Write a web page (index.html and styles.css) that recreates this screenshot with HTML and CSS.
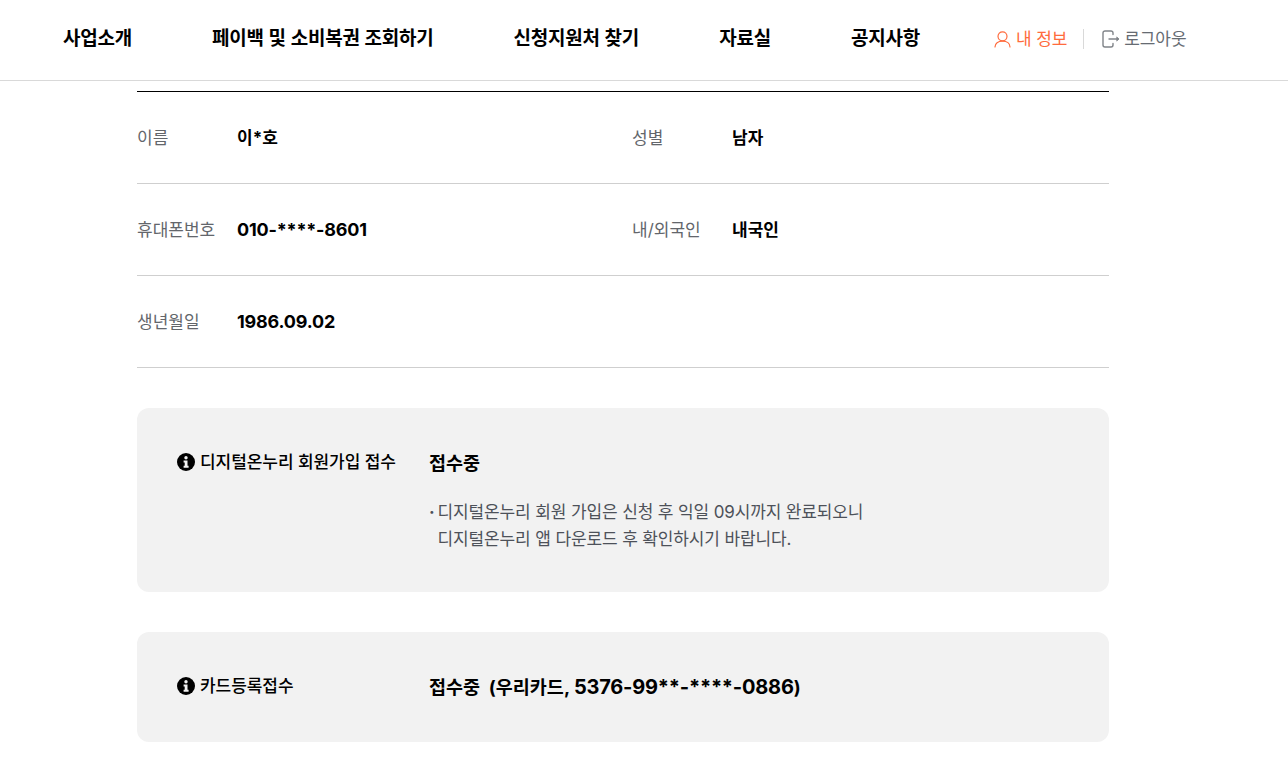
FILE: index.html
```html
<!DOCTYPE html>
<html lang="ko">
<head>
<meta charset="utf-8">
<title>내 정보</title>
<link rel="stylesheet" href="styles.css">
</head>
<body>
<header class="header">
  <nav class="nav">
    <a class="nav-item">사업소개</a>
    <a class="nav-item">페이백 및 소비복권 조회하기</a>
    <a class="nav-item">신청지원처 찾기</a>
    <a class="nav-item">자료실</a>
    <a class="nav-item">공지사항</a>
  </nav>
  <div class="util">
    <a class="util-link util-me">
      <svg class="util-icon" width="17" height="17" viewBox="0 0 17 17" fill="none" stroke="#ff6b3d" stroke-width="1.200"><circle cx="8.500" cy="5.300" r="4.500"/><path d="M1 16c0-3.500 3-5.800 7.500-5.800S16 12.500 16 16" stroke-linecap="round"/></svg>
      내 정보
    </a>
    <span class="util-sep"></span>
    <a class="util-link util-out">
      <svg class="util-icon" width="18" height="18" viewBox="0 0 18 18" fill="none" stroke="#808489" stroke-width="1.400" stroke-linecap="round" stroke-linejoin="round"><path d="M11 4.500V3a2 2 0 0 0-2-2H3a2 2 0 0 0-2 2v12a2 2 0 0 0 2 2h6a2 2 0 0 0 2-2v-1.500"/><path d="M7 9h9"/><path d="M15 7.200 17 9l-2 1.800z" fill="#808489" stroke-width="0.800"/></svg>
      로그아웃
    </a>
  </div>
</header>
<main class="main">
  <section class="info">
    <div class="info-row">
      <div class="info-cell"><span class="label">이름</span><span class="value">이*호</span></div>
      <div class="info-cell"><span class="label">성별</span><span class="value">남자</span></div>
    </div>
    <div class="info-row">
      <div class="info-cell"><span class="label">휴대폰번호</span><span class="value num">010-****-8601</span></div>
      <div class="info-cell"><span class="label">내/외국인</span><span class="value">내국인</span></div>
    </div>
    <div class="info-row">
      <div class="info-cell"><span class="label">생년월일</span><span class="value num">1986.09.02</span></div>
    </div>
  </section>
  <section class="panel panel-member">
    <div class="panel-title">
      <svg class="info-icon" width="18" height="18" viewBox="0 0 18 18"><circle cx="9" cy="9" r="9" fill="#000"/><circle cx="9" cy="4.800" r="1.700" fill="#f2f2f2"/><path d="M6.600 7.500h3.900v5.200h1.100v2H6.600v-2h1.100V9.500H6.600z" fill="#f2f2f2"/></svg>
      디지털온누리 회원가입 접수
    </div>
    <div class="panel-body">
      <p class="panel-status">접수중</p>
      <div class="panel-note">
        <span class="bullet">·</span>
        <p>디지털온누리 회원 가입은 신청 후 익일 09시까지 완료되오니<br>디지털온누리 앱 다운로드 후 확인하시기 바랍니다.</p>
      </div>
    </div>
  </section>
  <section class="panel panel-card">
    <div class="panel-title">
      <svg class="info-icon" width="18" height="18" viewBox="0 0 18 18"><circle cx="9" cy="9" r="9" fill="#000"/><circle cx="9" cy="4.800" r="1.700" fill="#f2f2f2"/><path d="M6.600 7.500h3.900v5.200h1.100v2H6.600v-2h1.100V9.500H6.600z" fill="#f2f2f2"/></svg>
      카드등록접수
    </div>
    <div class="panel-body">
      <p class="panel-status">접수중 &nbsp;(우리카드, <span class="status-num">5376-99**-****-0886</span>)</p>
    </div>
  </section>
</main>
</body>
</html>
```
FILE: styles.css
```css
* { box-sizing: border-box; }
html, body { margin: 0; padding: 0; }
body {
  background: #fff;
  color: #000;
  font-family: Inter, "Noto Sans CJK KR", sans-serif;
  overflow: hidden;
  height: 779px;
}
p { margin: 0; }
.header {
  height: 81px;
  border-bottom: 1px solid #d9d9d9;
  display: flex;
  align-items: center;
  padding: 0 0 2px 63px;
}
.nav { display: flex; gap: 80px; }
.nav-item {
  font-size: 19px;
  font-weight: 700;
  line-height: 28px;
  letter-spacing: -0.22px;
  word-spacing: 0.5px;
  white-space: nowrap;
}
.util { display: flex; align-items: center; margin-left: 74px; }
.util-link {
  display: flex;
  align-items: center;
  gap: 5px;
  font-size: 17px;
  line-height: 24px;
  letter-spacing: -0.1px;
  white-space: nowrap;
}
.util-me { color: #ff6b3d; }
.util-out { color: #666b72; gap: 4px; }
.util-sep { width: 1px; height: 20px; background: #d9d9d9; margin: 0 18px 0 16px; }
.main { width: 972px; margin: 10px 0 0 137px; }
.info { border-top: 1px solid #000; }
.info-row {
  display: flex;
  height: 92px;
  border-bottom: 1px solid #cfcfcf;
  align-items: center;
}
.info-cell { flex: none; width: 495px; display: flex; align-items: center; }
.label {
  width: 100px;
  font-size: 17px;
  line-height: 24px;
  color: #63666b;
  white-space: nowrap;
}
.value { font-size: 17px; font-weight: 700; line-height: 26px; }
.value.num { font-size: 18px; letter-spacing: -0.2px; }
.panel {
  display: flex;
  background: #f2f2f2;
  border-radius: 12px;
  padding: 0 40px;
  margin-top: 40px;
}
.panel-member { height: 184px; padding-top: 40px; }
.panel-card { height: 110px; padding-top: 40px; }
.panel-title {
  width: 252px;
  display: flex;
  align-items: flex-start;
  gap: 5px;
  font-size: 17px;
  font-weight: 500;
  line-height: 28px;
  letter-spacing: -0.06px;
  white-space: nowrap;
}
.info-icon { flex: none; margin-top: 5px; }
.panel-status {
  font-size: 18.500px;
  font-weight: 700;
  line-height: 30px;
  white-space: nowrap;
}
.status-num { font-size: 20px; letter-spacing: -0.2px; }
.panel-note {
  display: flex;
  gap: 3px;
  margin-top: 21px;
  font-size: 17px;
  line-height: 27px;
  letter-spacing: -0.13px;
  color: #4d5159;
  white-space: nowrap;
}
.bullet { font-weight: 700; }
```
